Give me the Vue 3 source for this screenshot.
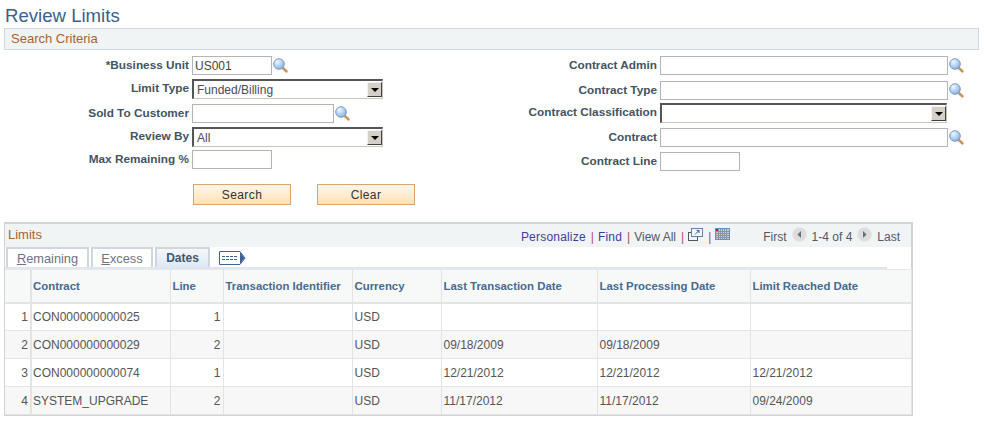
<script setup>
const leftRows = [
  { label: '*Business Unit', kind: 'input', size: 'short', value: 'US001', lookup: true, h: 19, mt: 0 },
  { label: 'Limit Type', kind: 'select', size: 'mid', value: 'Funded/Billing', h: 20, mt: 4 },
  { label: 'Sold To Customer', kind: 'input', size: 'med', value: '', lookup: true, h: 19, mt: 5 },
  { label: 'Review By', kind: 'select', size: 'mid', value: 'All', h: 20, mt: 4 },
  { label: 'Max Remaining %', kind: 'input', size: 'short', value: '', h: 19, mt: 3 }
]
const rightRows = [
  { label: 'Contract Admin', kind: 'input', size: 'long', value: '', lookup: true, h: 19, mt: 0 },
  { label: 'Contract Type', kind: 'input', size: 'long', value: '', lookup: true, h: 19, mt: 6 },
  { label: 'Contract Classification', kind: 'select', size: 'long2', value: '', h: 20, mt: 3 },
  { label: 'Contract', kind: 'input', size: 'long', value: '', lookup: true, h: 19, mt: 5 },
  { label: 'Contract Line', kind: 'input', size: 'short', value: '', h: 19, mt: 5 }
]
const columns = [
  { label: '', cls: 'c0' },
  { label: 'Contract', cls: 'c1' },
  { label: 'Line', cls: 'c2' },
  { label: 'Transaction Identifier', cls: 'c3' },
  { label: 'Currency', cls: 'c4' },
  { label: 'Last Transaction Date', cls: 'c5' },
  { label: 'Last Processing Date', cls: 'c6' },
  { label: 'Limit Reached Date', cls: 'c7' }
]
const rows = [
  ['1', 'CON000000000025', '1', '', 'USD', '', '', ''],
  ['2', 'CON000000000029', '2', '', 'USD', '09/18/2009', '09/18/2009', ''],
  ['3', 'CON000000000074', '1', '', 'USD', '12/21/2012', '12/21/2012', '12/21/2012'],
  ['4', 'SYSTEM_UPGRADE', '2', '', 'USD', '11/17/2012', '11/17/2012', '09/24/2009']
]
</script>

<template>
  <div class="page">
    <svg class="defs" width="0" height="0" aria-hidden="true">
      <defs>
        <radialGradient id="lens" cx="35%" cy="30%" r="75%">
          <stop offset="0" stop-color="#f2f8fe" />
          <stop offset="1" stop-color="#7fb0e4" />
        </radialGradient>
      </defs>
    </svg>
    <h1 class="title">Review Limits</h1>
    <div class="section-bar">Search Criteria</div>

    <div class="form">
      <div class="form-col left">
        <div v-for="r in leftRows" :key="r.label" class="row" :style="{ marginTop: r.mt + 'px', height: r.h + 'px' }">
          <label class="lbl">{{ r.label }}</label>
          <div v-if="r.kind === 'input'" class="input" :class="r.size">{{ r.value }}</div>
          <div v-else class="select" :class="r.size">
            <span class="select-text">{{ r.value }}</span>
            <span class="select-btn"><i></i></span>
          </div>
          <svg v-if="r.lookup" class="lookup" viewBox="0 0 15 15" width="15" height="15">
            <path d="M9.5 9.8 13.4 13.3" stroke="#c9945e" stroke-width="2.6" stroke-linecap="round" />
            <circle cx="6" cy="6" r="5.3" fill="url(#lens)" stroke="#7b9cc0" stroke-width="1" />
          </svg>
        </div>
        <div class="buttons">
          <div class="btn">Search</div>
          <div class="btn">Clear</div>
        </div>
      </div>

      <div class="form-col right">
        <div v-for="r in rightRows" :key="r.label" class="row" :style="{ marginTop: r.mt + 'px', height: r.h + 'px' }">
          <label class="lbl">{{ r.label }}</label>
          <div v-if="r.kind === 'input'" class="input" :class="r.size">{{ r.value }}</div>
          <div v-else class="select" :class="r.size">
            <span class="select-text">{{ r.value }}</span>
            <span class="select-btn"><i></i></span>
          </div>
          <svg v-if="r.lookup" class="lookup" viewBox="0 0 15 15" width="15" height="15">
            <path d="M9.5 9.8 13.4 13.3" stroke="#c9945e" stroke-width="2.6" stroke-linecap="round" />
            <circle cx="6" cy="6" r="5.3" fill="url(#lens)" stroke="#7b9cc0" stroke-width="1" />
          </svg>
        </div>
      </div>
    </div>

    <div class="grid">
      <div class="grid-head">
        <span class="grid-title">Limits</span>
        <div class="nav">
          <a class="link">Personalize</a><span class="sep">|</span>
          <a class="link">Find</a><span class="sep sep-b">|</span>
          <span class="muted">View All</span><span class="sep">|</span>
          <svg class="ico-zoom" width="15" height="13" viewBox="0 0 15 13">
            <rect x="0.5" y="4.5" width="9" height="8" fill="#f3f6f8" stroke="#555" />
            <rect x="3.5" y="0.5" width="11" height="8" fill="#f3f6f8" stroke="#5f83a8" />
            <path d="M7 6.5 11 2.5M8.5 2.5H11V5" fill="none" stroke="#44607c" />
          </svg>
          <span class="sep sep-b">|</span>
          <svg class="ico-cal" width="15" height="12" viewBox="0 0 15 12">
            <rect x="0.5" y="0.5" width="14" height="11" fill="#c5cdd8" stroke="#5f8fca" />
            <path d="M1 3.5H14M1 5.5H14M1 7.5H14M1 9.5H14M3.5 1V11M5.5 1V11M7.5 1V11M9.5 1V11M11.5 1V11" stroke="#8a94a3" stroke-width="1" />
            <rect x="1" y="1" width="2" height="2" fill="#e8141c" />
          </svg>
          <span class="muted first">First</span>
          <svg class="ico-pg" width="15" height="15" viewBox="0 0 15 15">
            <circle cx="7.5" cy="7.5" r="7" fill="#dcdcdc" stroke="#e8e8e8" />
            <path d="M9 4 5.5 7.5 9 11Z" fill="#6e6e6e" />
          </svg>
          <span class="muted count">1-4 of 4</span>
          <svg class="ico-pg" width="15" height="15" viewBox="0 0 15 15">
            <circle cx="7.5" cy="7.5" r="7" fill="#dcdcdc" stroke="#e8e8e8" />
            <path d="M6 4 9.5 7.5 6 11Z" fill="#6e6e6e" />
          </svg>
          <span class="muted last">Last</span>
        </div>
      </div>

      <div class="tabs">
        <div class="tab t1"><u>R</u>emaining</div>
        <div class="tab t2"><u>E</u>xcess</div>
        <div class="tab t3">Dates</div>
        <svg class="ico-tabs" width="27" height="14" viewBox="0 0 27 14">
          <path d="M0.5 0.5H21L26 7 21 13.5H0.5Z" fill="#fff" stroke="#3f5f96" />
          <path d="M21 1 25.5 7 21 13Z" fill="#3f5f96" />
          <path d="M3 5.5H19M3 8.5H19" stroke="#3f5f96" stroke-dasharray="3 1" />
        </svg>
      </div>
      <div class="tab-line"></div>

      <table class="tbl">
        <colgroup>
          <col v-for="c in columns" :key="c.cls" :class="c.cls" />
        </colgroup>
        <thead>
          <tr>
            <th v-for="c in columns" :key="c.cls">{{ c.label }}</th>
          </tr>
        </thead>
        <tbody>
          <tr v-for="r in rows" :key="r[0]">
            <td v-for="(v, i) in r" :key="i" :class="{ num: i === 0 || i === 2 }">{{ v }}</td>
          </tr>
        </tbody>
      </table>
    </div>
  </div>
</template>

<style>
html, body { margin: 0; background: #fff; }
</style>

<style scoped>
.page {
  width: 984px;
  height: 424px;
  overflow: hidden;
  font-family: "Liberation Sans", Arial, sans-serif;
  font-size: 12px;
  color: #444;
  box-sizing: border-box;
  padding: 4px 5px 0 4px;
}
.defs { display: block; height: 0; }
.title {
  margin: 0 0 0 1px;
  height: 24px;
  font-size: 18.6px;
  line-height: 24px;
  font-weight: normal;
  color: #3b5e8c;
}
.section-bar {
  width: 975px;
  height: 22px;
  box-sizing: border-box;
  border: 1px solid #cfd8de;
  background: #f0f4f5;
  color: #a8622e;
  line-height: 19px;
  padding-left: 6px;
  font-size: 13px;
}
.form {
  display: flex;
  margin-top: 6px;
  height: 164px;
}
.form-col.left { width: 468px; }
.form-col .lbl { width: 185px; }
.row {
  display: flex;
  align-items: flex-start;
}
.lbl {
  flex: none;
  box-sizing: border-box;
  text-align: right;
  font-weight: bold;
  color: #44535f;
  font-size: 11.8px;
  line-height: 16px;
  margin: 1px 3px 0 0;
}
.input {
  flex: none;
  box-sizing: border-box;
  height: 19px;
  border: 1px solid #b4b4b4;
  background: #fff;
  padding-left: 2px;
  line-height: 19px;
  font-size: 12px;
  color: #444;
}
.short { width: 80px; }
.med { width: 142px; }
.long { width: 288px; }
.select {
  flex: none;
  box-sizing: border-box;
  height: 20px;
  display: flex;
  justify-content: space-between;
  border-top: 2px solid #555;
  border-left: 2px solid #555;
  border-right: 1px solid #c9c5bc;
  border-bottom: 1px solid #c9c5bc;
  background: #fff;
}
.mid { width: 191px; }
.long2 { width: 287px; }
.select-text {
  padding-left: 3px;
  line-height: 19px;
  font-size: 12px;
  color: #4a4a55;
}
.select-btn {
  width: 15px;
  height: 15px;
  margin-top: 1px;
  box-sizing: border-box;
  background: #d4d0c8;
  border-top: 1px solid #f2f2f2;
  border-left: 1px solid #f2f2f2;
  border-right: 1px solid #404040;
  border-bottom: 1px solid #404040;
  display: flex;
  align-items: center;
  justify-content: center;
}
.select-btn i {
  display: block;
  width: 0;
  height: 0;
  border-left: 4px solid transparent;
  border-right: 4px solid transparent;
  border-top: 4px solid #000;
}
.lookup {
  flex: none;
  margin: 2px 0 0 1px;
}
.buttons {
  display: flex;
  gap: 26px;
  margin: 15px 0 0 189px;
}
.btn {
  width: 98px;
  height: 21px;
  box-sizing: border-box;
  border: 1px solid #dba56f;
  background: linear-gradient(#fdf6e8, #fde2b8);
  text-align: center;
  line-height: 20px;
  font-size: 12px;
  color: #333;
  letter-spacing: 0.4px;
}
.grid {
  width: 909px;
  height: 194px;
  margin-top: 2px;
  box-sizing: border-box;
  border: 1px solid #cfd4da;
  border-width: 2px 2px 2px 1px;
}
.grid-head {
  height: 23px;
  background: #f0f4f5;
  display: flex;
  justify-content: space-between;
  align-items: center;
}
.grid-title {
  padding: 0 0 2px 3px;
  color: #a8622e;
  font-size: 13px;
}
.nav {
  display: flex;
  align-items: center;
  padding: 2px 11px 0 0;
  font-size: 12px;
  color: #5b6570;
}
.link { color: #3c3f9a; letter-spacing: 0.2px; }
.muted { color: #515a64; }
.sep { color: #c0457a; margin: 0 4px 0 5px; }
.sep-b { color: #9a5a3a; }
.first { margin-left: 33px; }
.ico-pg { margin: -5px 5px 0 5px; }
.ico-zoom { margin-top: -4px; }
.ico-cal { margin-top: -6px; }
.tabs {
  display: flex;
  align-items: flex-end;
  height: 20px;
  padding-left: 1px;
}
.tab {
  box-sizing: border-box;
  height: 20px;
  border: 2px solid #cfd6de;
  border-bottom: 0;
  line-height: 19px;
  text-align: center;
  font-size: 12.8px;
  color: #6a7480;
  margin-right: 2px;
}
.t1 { width: 83px; }
.t2 { width: 62px; }
.t3 {
  width: 55px;
  background: linear-gradient(#f4f7fb, #dfe8f4);
  font-size: 12px;
  font-weight: bold;
  color: #44566c;
}
.ico-tabs {
  margin: 0 0 2px 7px;
}
.tab-line {
  width: 882px;
  height: 2px;
  background: #dfe6f2;
}
.tbl {
  width: 906px;
  table-layout: fixed;
  border-collapse: collapse;
  font-size: 12px;
}
.c0 { width: 26px; }
.c1 { width: 139px; }
.c2 { width: 53px; }
.c3 { width: 129px; }
.c4 { width: 89px; }
.c5 { width: 156px; }
.c6 { width: 153px; }
.c7 { width: 161px; }
th {
  height: 33px;
  box-sizing: border-box;
  background: #f7f8f8;
  border-right: 1px solid #e4e4e4;
  border-bottom: 2px solid #e4e4e4;
  border-top: 1px solid #e8e8e8;
  text-align: left;
  padding: 0 2px;
  font-size: 11.4px;
  font-weight: bold;
  color: #476a8e;
  white-space: nowrap;
  overflow: hidden;
}
th:first-child, td:first-child { border-right: 2px solid #e4e4e4; }
th:nth-child(2), td:nth-child(2) { padding-left: 1px; }
td {
  height: 28px;
  box-sizing: border-box;
  border-right: 1px solid #e4e4e4;
  border-bottom: 1px solid #e4e4e4;
  padding: 0 2px;
  color: #555;
  white-space: nowrap;
  overflow: hidden;
}
tbody tr:nth-child(even) td { background: #f7f7f7; }
td.num { text-align: right; }
</style>
